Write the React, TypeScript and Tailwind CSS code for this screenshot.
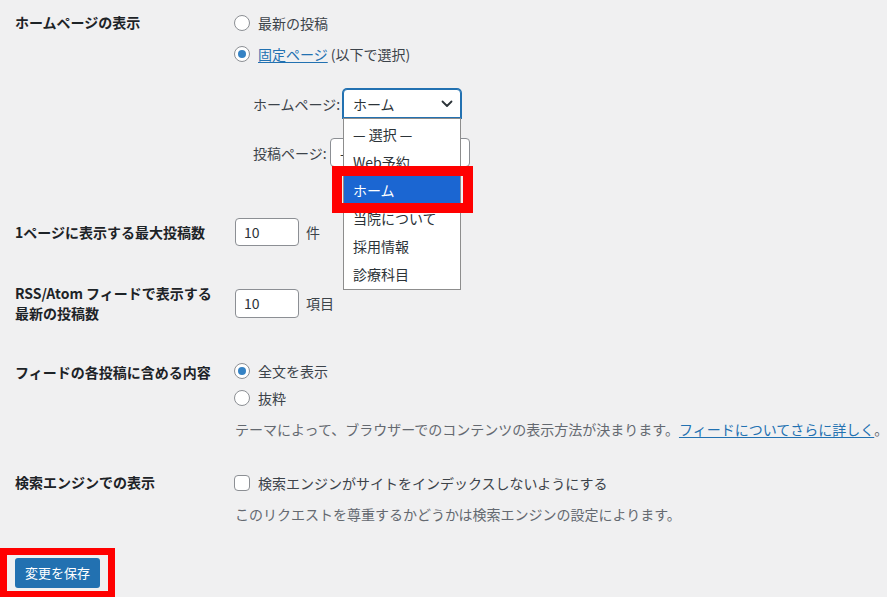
import React from "react";

function Radio({ checked }: { checked?: boolean }) {
  return (
    <span className="-ml-px flex h-[16px] w-[16px] shrink-0 items-center justify-center rounded-full border border-[#8c8f94] bg-white">
      {checked && <span className="h-[8px] w-[8px] rounded-full bg-[#3582c4]" />}
    </span>
  );
}

export default function App() {
  const items = ["— 選択 —", "Web予約", "ホーム", "当院について", "採用情報", "診療科目"];
  return (
    <div className="relative min-h-[597px] w-[887px] overflow-hidden bg-[#f0f0f1] pl-[15px] font-['Noto_Sans_CJK_JP','Noto_Sans',sans-serif] text-[14px] leading-[20px] text-[#3c434a]">
      {/* Row 1 */}
      <div className="flex">
        <div className="w-[220px] shrink-0 pt-[12px] font-semibold text-[#1d2327]">ホームページの表示</div>
        <div className="flex flex-col pt-[13px]">
          <div className="flex h-[20px] items-center gap-[8px]">
            <Radio />
            <span>最新の投稿</span>
          </div>
          <div className="mt-[11px] flex h-[20px] items-center gap-[8px]">
            <Radio checked />
            <span>
              <span className="text-[#2271b1] underline underline-offset-2">固定ページ</span> (以下で選択)
            </span>
          </div>
          <div className="mt-[25px] flex items-center pl-[18px]">
            <span className="w-[90px] shrink-0">ホームページ:</span>
            <div className="relative z-20">
              <div className="flex h-[29px] w-[118px] items-center justify-between rounded-t-[4px] border border-[#2271b1] bg-white pl-[9px] pr-[7px] text-[#2c3338] shadow-[0_0_0_1px_#2271b1]">
                <span>ホーム</span>
                <svg width="12" height="8" viewBox="0 0 12 8" fill="none">
                  <path d="M1.5 1.5L6 6L10.5 1.5" stroke="#2c3338" strokeWidth="1.8" strokeLinecap="round" strokeLinejoin="round" />
                </svg>
              </div>
              <div className="absolute left-0 top-[29px] w-[118px] border border-[#8d8d8d] bg-white py-[1px]">
                {items.map((t) => (
                  <div
                    key={t}
                    className={
                      t === "ホーム"
                        ? "flex h-[28px] items-center bg-[#1b66d2] pl-[9px] text-white"
                        : "flex h-[28px] items-center pl-[9px] text-[#2c3338]"
                    }
                  >
                    {t}
                  </div>
                ))}
              </div>
            </div>
          </div>
          <div className="mt-[20px] flex items-center pl-[18px]">
            <span className="w-[77px] shrink-0">投稿ページ:</span>
            <div className="flex h-[29px] w-[140px] items-center rounded-[4px] border border-[#8c8f94] bg-white pl-[9px] text-[#2c3338]">
              — 選択 —
            </div>
          </div>
        </div>
      </div>

      {/* Row 2 */}
      <div className="mt-[51px] flex items-center">
        <div className="w-[220px] shrink-0 font-semibold text-[#1d2327]">1ページに表示する最大投稿数</div>
        <div className="flex items-center gap-[7px]">
          <div className="flex h-[28px] w-[64px] items-center rounded-[4px] border border-[#8c8f94] bg-white pl-[8px] text-[#2c3338]">10</div>
          <span>件</span>
        </div>
      </div>

      {/* Row 3 */}
      <div className="mt-[37px] flex items-center">
        <div className="w-[220px] shrink-0 font-semibold text-[#1d2327]">
          RSS/Atom フィードで表示する
          <br />
          最新の投稿数
        </div>
        <div className="flex items-center gap-[7px]">
          <div className="flex h-[29px] w-[64px] items-center rounded-[4px] border border-[#8c8f94] bg-white pl-[8px] text-[#2c3338]">10</div>
          <span>項目</span>
        </div>
      </div>

      {/* Row 4 */}
      <div className="mt-[38px] flex">
        <div className="w-[220px] shrink-0 pt-[1px] font-semibold text-[#1d2327]">フィードの各投稿に含める内容</div>
        <div className="flex flex-col">
          <div className="flex h-[20px] items-center gap-[8px]">
            <Radio checked />
            <span>全文を表示</span>
          </div>
          <div className="mt-[7px] flex h-[20px] items-center gap-[8px]">
            <Radio />
            <span>抜粋</span>
          </div>
          <p className="mt-[11px] whitespace-nowrap text-[#646970]">
            テーマによって、ブラウザーでのコンテンツの表示方法が決まります。
            <span className="text-[#2271b1] underline underline-offset-2">フィードについてさらに詳しく</span>。
          </p>
        </div>
      </div>

      {/* Row 5 */}
      <div className="mt-[34px] flex">
        <div className="w-[220px] shrink-0 -mt-px font-semibold text-[#1d2327]">検索エンジンでの表示</div>
        <div className="flex flex-col">
          <div className="flex h-[20px] items-center gap-[8px]">
            <span className="-ml-px h-[16px] w-[16px] shrink-0 rounded-[4px] border border-[#8c8f94] bg-white" />
            <span>検索エンジンがサイトをインデックスしないようにする</span>
          </div>
          <p className="mt-[11px] text-[#646970]">このリクエストを尊重するかどうかは検索エンジンの設定によります。</p>
        </div>
      </div>

      {/* Button */}
      <div className="mt-[34px] flex">
        <button className="h-[30px] rounded-[3px] bg-[#2271b1] px-[10px] text-[13px] leading-[30px] text-white">変更を保存</button>
      </div>

      {/* Red annotation boxes */}
      <div className="pointer-events-none absolute left-[332px] top-[166px] z-30 h-[47px] w-[141px] border-[10px] border-[#ff0000]" />
      <div className="pointer-events-none absolute left-0 top-[548px] z-30 h-[50px] w-[115px] border-[7px] border-[#ff0000]" />
    </div>
  );
}
